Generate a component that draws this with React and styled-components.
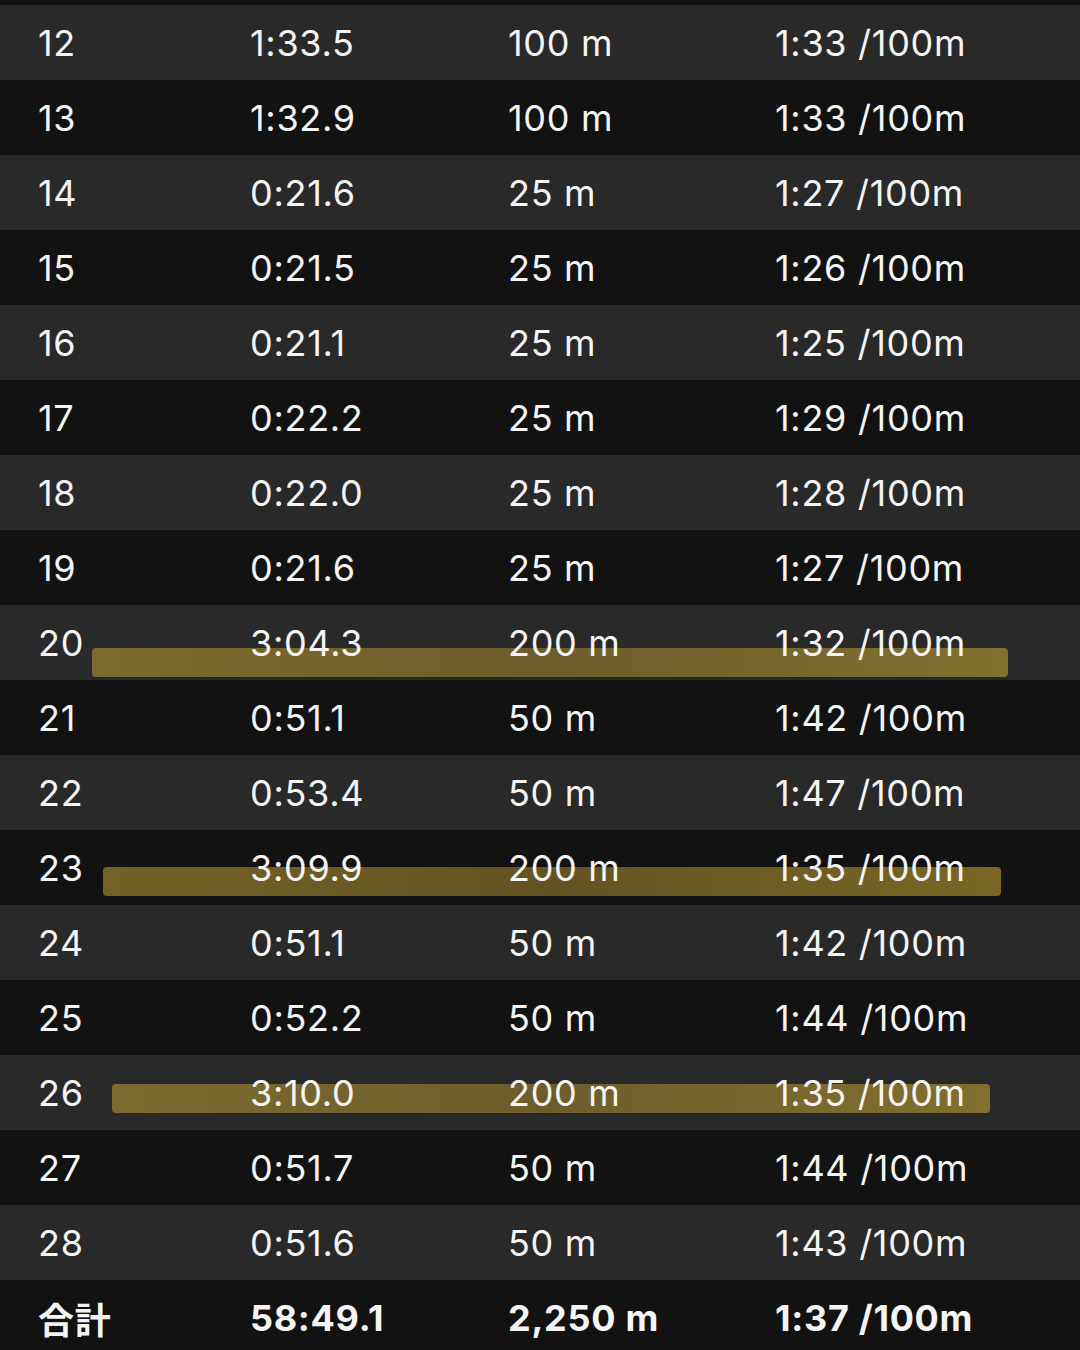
import React from 'react';
import styled, { createGlobalStyle } from 'styled-components';

const GlobalStyle = createGlobalStyle`
  html, body {
    margin: 0;
    padding: 0;
    background: #121212;
  }
  body {
    width: 1080px;
    height: 1350px;
    overflow: hidden;
    font-family: Inter, "Liberation Sans", "Noto Sans CJK JP", sans-serif;
    -webkit-font-smoothing: antialiased;
  }
`;

const Table = styled.div`
  width: 1080px;
  display: flex;
  flex-direction: column;
`;

const TopEdge = styled.div`
  height: 5px;
  background: #121212;
`;

const Row = styled.div`
  position: relative;
  height: 75px;
  display: grid;
  grid-template-columns: 212px 258px 267px 1fr;
  align-items: center;
  padding-left: 38px;
  padding-top: 1px;
  box-sizing: border-box;
  background: ${(p) => (p.$shade ? '#292929' : '#121212')};
  color: #f4f4f4;
  font-size: 36px;
  font-weight: ${(p) => (p.$total ? 700 : 400)};
  letter-spacing: 0.7px;
`;

const Cell = styled.span`
  position: relative;
  z-index: 1;
  white-space: nowrap;
  font-family: ${(p) =>
    p.$jp ? '"Noto Sans CJK JP", sans-serif' : 'inherit'};
`;

// highlighter stroke drawn over a lap
const Marker = styled.div`
  position: absolute;
  left: ${(p) => p.$left}px;
  width: ${(p) => p.$width}px;
  top: ${(p) => p.$top}px;
  height: 29px;
  border-radius: 4px;
  background: linear-gradient(
    90deg,
    rgba(180, 150, 50, 0.6),
    rgba(165, 136, 45, 0.55) 50%,
    rgba(185, 155, 50, 0.62)
  );
  z-index: 0;
`;

const laps = [
  ['12', '1:33.5', '100 m', '1:33 /100m'],
  ['13', '1:32.9', '100 m', '1:33 /100m'],
  ['14', '0:21.6', '25 m', '1:27 /100m'],
  ['15', '0:21.5', '25 m', '1:26 /100m'],
  ['16', '0:21.1', '25 m', '1:25 /100m'],
  ['17', '0:22.2', '25 m', '1:29 /100m'],
  ['18', '0:22.0', '25 m', '1:28 /100m'],
  ['19', '0:21.6', '25 m', '1:27 /100m'],
  ['20', '3:04.3', '200 m', '1:32 /100m'],
  ['21', '0:51.1', '50 m', '1:42 /100m'],
  ['22', '0:53.4', '50 m', '1:47 /100m'],
  ['23', '3:09.9', '200 m', '1:35 /100m'],
  ['24', '0:51.1', '50 m', '1:42 /100m'],
  ['25', '0:52.2', '50 m', '1:44 /100m'],
  ['26', '3:10.0', '200 m', '1:35 /100m'],
  ['27', '0:51.7', '50 m', '1:44 /100m'],
  ['28', '0:51.6', '50 m', '1:43 /100m'],
];

const marks = {
  '20': { left: 92, width: 916, top: 43 },
  '23': { left: 103, width: 898, top: 37 },
  '26': { left: 112, width: 878, top: 29 },
};

export default function App() {
  return (
    <>
      <GlobalStyle />
      <Table>
        <TopEdge />
        {laps.map((lap, i) => {
          const m = marks[lap[0]];
          return (
            <Row key={lap[0]} $shade={i % 2 === 0}>
              {m && <Marker $left={m.left} $width={m.width} $top={m.top} />}
              {lap.map((v, j) => (
                <Cell key={j}>{v}</Cell>
              ))}
            </Row>
          );
        })}
        <Row $total>
          <Cell $jp>合計</Cell>
          <Cell>58:49.1</Cell>
          <Cell>2,250 m</Cell>
          <Cell>1:37 /100m</Cell>
        </Row>
      </Table>
    </>
  );
}
